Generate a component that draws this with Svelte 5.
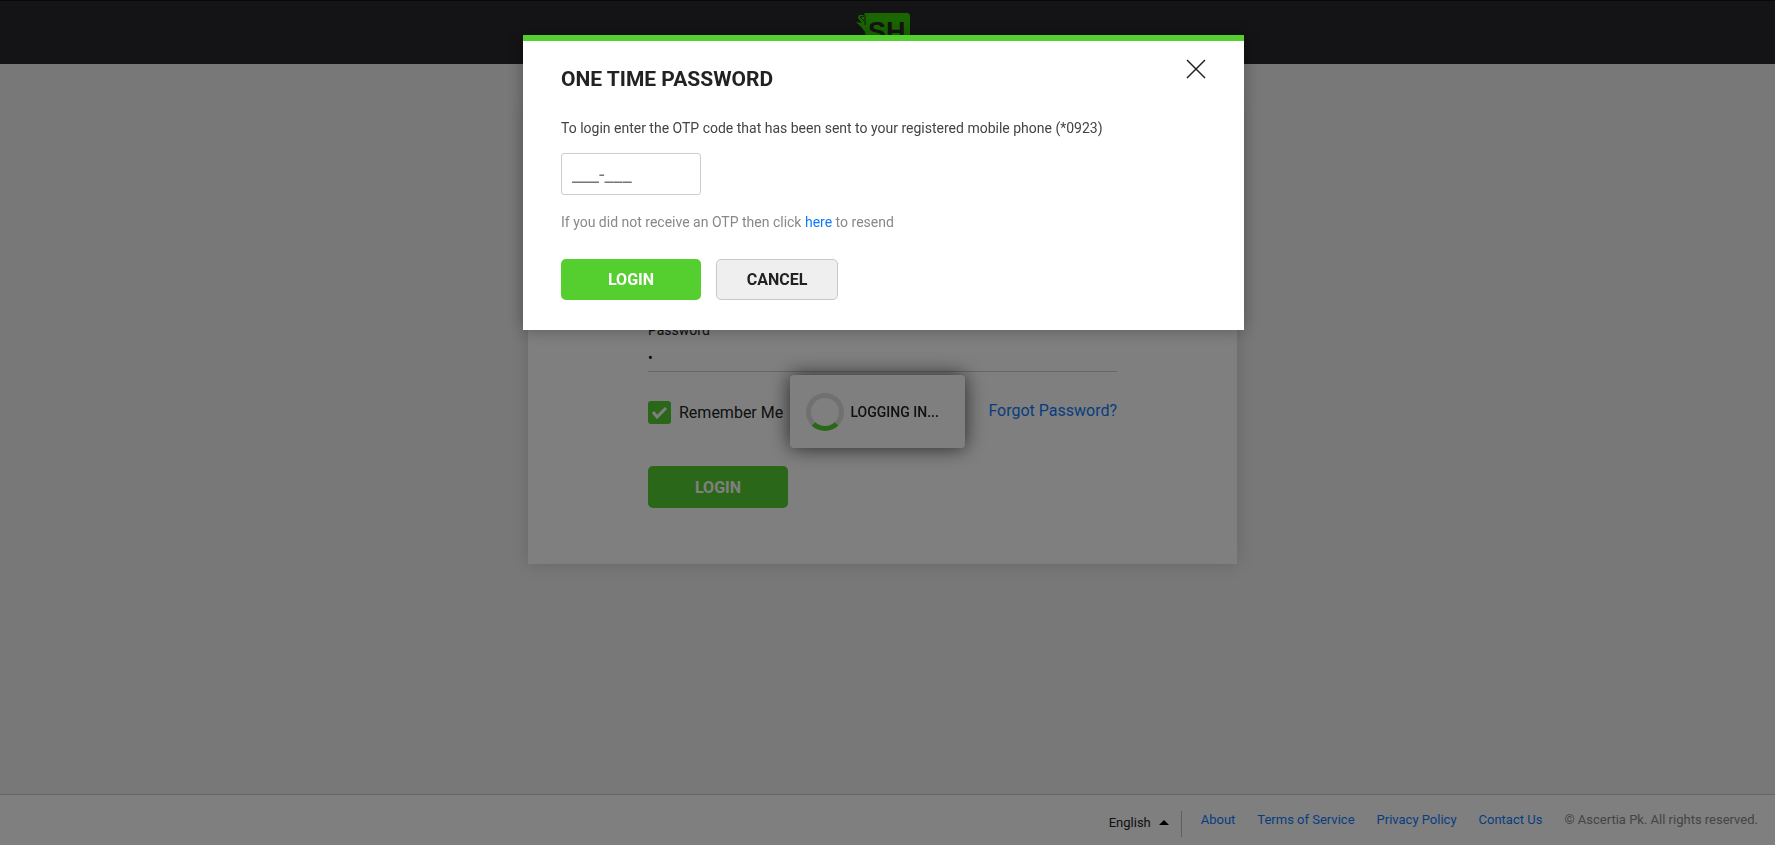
<script>
    let password = $state('x');
    let remember = $state(true);
    let otp = $state('');
    let language = $state('English');
    let showOtp = $state(true);

    const links = ['About', 'Terms of Service', 'Privacy Policy', 'Contact Us'];

    const closeOtp = () => {
        showOtp = false;
    }
</script>

<div class="page">
    <header>
        <svg class="logo" width="56" height="42" viewBox="0 0 56 42" role="img" aria-label="SH">
            <path d="M9 0 H51 Q54 0 54 3 V40 H14 Q10 30 9 19 Q5 13 0 9 L6 10 L2 5 L3 2 L8 2 Z" fill="#34cc00" />
            <path d="M8 3 L4 4 L8 8 M9 2 V12" fill="none" stroke="#28282c" stroke-width="1" />
            <text x="12" y="28" class="logo-text">SH</text>
        </svg>
    </header>

    <main>
        <form class="card" onsubmit={(e) => e.preventDefault()}>
            <label class="field-label" for="password">Password</label>
            <input class="password" id="password" type="password" bind:value={password} />
            <div class="options">
                <label class="remember">
                    <input type="checkbox" bind:checked={remember} />
                    <span>Remember Me</span>
                </label>
                <a href="#forgot">Forgot Password?</a>
            </div>
            <button class="btn primary" type="submit">LOGIN</button>
        </form>
    </main>

    <footer>
        <div class="language">
            <select bind:value={language} aria-label="Language">
                <option>English</option>
            </select>
            <svg width="10" height="5" viewBox="0 0 10 5" aria-hidden="true">
                <path d="M0 5 L5 0 L10 5 Z" fill="#000" />
            </svg>
        </div>
        <nav>
            {#each links as link}
                <a href="#{link}">{link}</a>
            {/each}
        </nav>
        <span class="copyright">© Ascertia Pk. All rights reserved.</span>
    </footer>
</div>

<div class="loader" role="status">
    <span class="spinner"></span>
    <span>LOGGING IN...</span>
</div>

{#if showOtp}
    <div class="overlay">
        <div class="modal" role="dialog" aria-modal="true" aria-labelledby="otp-title">
            <div class="modal-head">
                <h1 id="otp-title">ONE TIME PASSWORD</h1>
                <button class="close" aria-label="Close" onclick={closeOtp}>
                    <svg width="20" height="20" viewBox="0 0 20 20">
                        <path d="M1 1 L19 19 M19 1 L1 19" fill="none" stroke="#222" stroke-width="1.5" />
                    </svg>
                </button>
            </div>
            <label class="message" for="otp">To login enter the OTP code that has been sent to your registered mobile phone (*0923)</label>
            <input class="otp" id="otp" placeholder="___-___" bind:value={otp} />
            <p class="resend">If you did not receive an OTP then click <a href="#resend">here</a> to resend</p>
            <div class="actions">
                <button class="btn primary">LOGIN</button>
                <button class="btn cancel" onclick={closeOtp}>CANCEL</button>
            </div>
        </div>
    </div>
{/if}

<style>
    :global(body) {
        background: #f0f0f0;
        font-family: Roboto, "Liberation Sans", sans-serif;
        font-size: 14px;
        line-height: 20px;
        color: #222;
    }

    * {
        box-sizing: border-box;
    }

    input, select, button {
        font-family: inherit;
    }

    a {
        color: #0d7bff;
        text-decoration: none;
    }

    .page {
        min-height: 100vh;
        display: flex;
        flex-direction: column;
    }

    header {
        height: 64px;
        padding: 12px 8px 0 0;
        display: flex;
        justify-content: center;
        align-items: flex-start;
        background: #28282c;
        border-top: 1px solid #111;
    }

    .logo-text {
        font-family: "Liberation Sans", sans-serif;
        font-size: 27px;
        font-weight: 700;
        fill: #28282c;
    }

    main {
        flex: 1;
        display: flex;
        justify-content: center;
        align-items: flex-start;
        padding: 40px 10px 40px 0;
    }

    .card {
        width: 100%;
        max-width: 709px;
        padding: 216px 120px 56px;
        background: #fff;
        box-shadow: 0 0 16px rgba(0, 0, 0, 0.15);
    }

    .field-label {
        display: block;
    }

    .password {
        display: block;
        width: 100%;
        height: 32px;
        padding: 8px 0 4px;
        border: 0;
        border-bottom: 1px solid #ccc;
        background: none;
        font-size: 14px;
        color: #000;
        outline: none;
    }

    .options {
        display: flex;
        justify-content: space-between;
        align-items: flex-start;
        margin: 29px 0 42px;
        font-size: 16px;
        line-height: 20px;
    }

    .remember {
        display: flex;
        align-items: center;
        gap: 8px;
    }

    .remember input {
        appearance: none;
        width: 23px;
        height: 23px;
        margin: 0;
        border-radius: 3px;
        background: #ddd;
    }

    .remember input:checked {
        background: #55cf30 url("data:image/svg+xml,%3Csvg xmlns='http://www.w3.org/2000/svg' viewBox='0 0 23 23'%3E%3Cpath d='M5 11 L9 16 L18 7' fill='none' stroke='white' stroke-width='3'/%3E%3C/svg%3E");
    }

    .btn {
        height: 42px;
        border: 0;
        border-radius: 5px;
        font-size: 16px;
        font-weight: 700;
    }

    .primary {
        width: 140px;
        background: #55cf30;
        color: #fff;
    }

    .cancel {
        width: 122px;
        background: #efefef;
        border: 1px solid #c8c8cc;
        color: #222;
    }

    footer {
        display: flex;
        justify-content: flex-end;
        align-items: center;
        min-height: 51px;
        padding-right: 17px;
        border-top: 1px solid #ccc;
        background: #fff;
        font-size: 13px;
    }

    .language {
        display: flex;
        align-items: center;
        gap: 7px;
        height: 26px;
        margin-top: 8px;
        padding: 0 12px 4px 0;
        border-right: 1px solid #bbb;
    }

    .language select {
        appearance: none;
        padding: 0;
        border: 0;
        background: none;
        color: #222;
        font-size: 13px;
    }

    nav {
        display: flex;
        gap: 22px;
        padding: 0 22px 0 19px;
    }

    .copyright {
        color: #888;
    }

    .loader {
        position: fixed;
        top: 375px;
        left: calc(50% - 98px);
        width: 175px;
        height: 73px;
        display: flex;
        align-items: center;
        gap: 7px;
        padding-left: 16px;
        border-radius: 4px;
        background: #fff;
        box-shadow: 0 0 20px rgba(0, 0, 0, 0.7);
        font-weight: 500;
    }

    .spinner {
        width: 38px;
        height: 38px;
        border: 5px solid #e0e0e0;
        border-bottom-color: #55cf30;
        border-radius: 50%;
    }

    .overlay {
        position: fixed;
        inset: 0;
        display: flex;
        justify-content: center;
        align-items: flex-start;
        padding: 35px 8px 0 0;
        background: rgba(0, 0, 0, 0.5);
    }

    .modal {
        width: 721px;
        padding: 24px 38px 30px;
        border-top: 6px solid #55cf30;
        background: #fff;
        box-shadow: 0 0 16px rgba(0, 0, 0, 0.3);
    }

    .modal-head {
        display: flex;
        justify-content: space-between;
        align-items: flex-start;
    }

    h1 {
        margin: 0;
        font-size: 21px;
        line-height: 28px;
        font-weight: 700;
    }

    .close {
        display: flex;
        margin-top: -6px;
        padding: 0;
        border: 0;
        background: none;
    }

    .message {
        display: block;
        margin-top: 25px;
        color: #444;
    }

    .otp {
        display: block;
        width: 140px;
        height: 42px;
        margin: 15px 0 17px;
        padding: 8px 10px;
        border: 1px solid #ccc;
        border-radius: 3px;
        font-size: 20px;
    }

    .otp::placeholder {
        color: #777;
    }

    .resend {
        margin: 0;
        color: #888;
    }

    .actions {
        display: flex;
        gap: 15px;
        margin-top: 27px;
    }

    .actions .btn {
        height: 41px;
    }
</style>
